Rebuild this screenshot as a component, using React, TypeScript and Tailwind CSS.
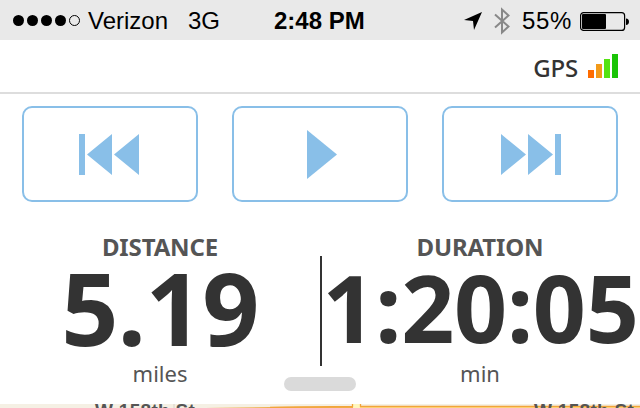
import React from 'react';

const bars = [
    { id: 'low', style: 'h-2 bg-[#ff6c00]' },
    { id: 'fair', style: 'h-[14px] bg-[#f29a1a]' },
    { id: 'good', style: 'h-[19px] bg-[#55e212]' },
    { id: 'full', style: 'h-6 bg-[#1ac406]' },
];

const controls = [
    {
        name: 'Previous',
        icon: (
            <svg className="mr-0.5" width="60" height="50" viewBox="0 0 60 50" fill="currentColor">
                <path d="M0 5H6V46H0ZM33 5V46L8 25.5ZM60 5V46L35 25.5Z" />
            </svg>
        ),
    },
    {
        name: 'Play',
        icon: (
            <svg width="60" height="50" viewBox="0 0 60 50" fill="currentColor">
                <path d="M17 1V50L47 25.5Z" />
            </svg>
        ),
    },
    {
        name: 'Next',
        icon: (
            <svg className="ml-0.5" width="60" height="50" viewBox="0 0 60 50" fill="currentColor">
                <path d="M0 5V46L25 25.5ZM27 5V46L52 25.5ZM54 5H60V46H54Z" />
            </svg>
        ),
    },
];

function StatusBar() {
    return (
        <header className="grid h-10 grid-cols-[274px_92px_1fr] items-center bg-[#e9e9e9] pt-0.5 font-['Liberation_Sans',sans-serif] text-2xl leading-none text-black">
            <div className="flex items-center pl-[13px]">
                <svg className="mr-[7px]" width="68" height="12" viewBox="0 0 68 12">
                    <circle cx="5.5" cy="5.5" r="5.5" />
                    <circle cx="19.5" cy="5.5" r="5.5" />
                    <circle cx="33.5" cy="5.5" r="5.5" />
                    <circle cx="47.5" cy="5.5" r="5.5" />
                    <circle cx="61.5" cy="5.5" r="5" fill="none" stroke="black" />
                </svg>
                <span className="w-[100px]">Verizon</span>
                <span>3G</span>
            </div>
            <span className="whitespace-nowrap font-bold">2:48 PM</span>
            <div className="flex items-center pl-[98px]">
                <svg width="18" height="18" viewBox="0 0 18 18">
                    <path d="M18 0L10 18L9 9L0 8Z" />
                </svg>
                <svg className="ml-3 mr-3" width="16" height="28" viewBox="0 0 16 28" fill="none" stroke="#888" strokeWidth="2">
                    <path d="M1 7.5L14.5 19.5L8 25.5V2.5L14.5 8.5L1 20.5" />
                </svg>
                <span className="w-[58px] tracking-[0.6px]">55%</span>
                <svg width="49" height="19" viewBox="0 0 49 19">
                    <rect x="0.6" y="0.6" width="44" height="17.8" rx="3" fill="none" stroke="black" strokeWidth="1.2" />
                    <rect x="2" y="2" width="24" height="15" rx="1" />
                    <path d="M46 6.5C48 6.5 49 8 49 9.7S48 13 46 13Z" />
                </svg>
            </div>
        </header>
    );
}

export default function App() {
    return (
        <div className="flex h-[408px] w-[640px] flex-col overflow-hidden bg-white font-['Noto_Sans','Open_Sans',sans-serif] text-[#555]">
            <StatusBar />

            {/* GPS signal */}
            <div className="flex h-[54px] items-center justify-end gap-[10px] border-b-2 border-[#ddd] pr-[22px]">
                <span className="pt-[3px] text-2xl font-medium leading-none tracking-[-0.2px] text-[#333]">GPS</span>
                <div className="flex h-6 items-end gap-0.5">
                    {bars.map(bar => (
                        <div key={bar.id} className={`w-1.5 ${bar.style}`} />
                    ))}
                </div>
            </div>

            {/* Playback controls */}
            <div className="flex gap-[34px] px-[22px] pt-3">
                {controls.map(item => (
                    <button
                        key={item.name}
                        aria-label={item.name}
                        className="flex h-24 w-[176px] items-center justify-center rounded-[10px] border-2 border-[#89bfe8] text-[#89bfe8]">
                        {item.icon}
                    </button>
                ))}
            </div>

            {/* Workout stats */}
            <section className="relative flex h-[202px] shrink-0 pt-[31px] text-center">
                <div className="w-[320px]">
                    <h2 className="text-2xl font-bold leading-7 tracking-[-0.15px]">DISTANCE</h2>
                    <p className="mt-[7px] h-[91px] text-[100px] font-bold leading-[78px] tracking-[-0.5px] text-[#333]">5.19</p>
                    <p className="text-[22px] leading-7">miles</p>
                </div>
                <div className="w-[320px]">
                    <h2 className="text-2xl font-bold leading-7 tracking-[-0.15px]">DURATION</h2>
                    <p className="mt-[7px] h-[91px] whitespace-nowrap pl-px text-[93px] font-bold leading-[78px] tracking-[-0.3px] text-[#333]">1:20:05</p>
                    <p className="text-[22px] leading-7">min</p>
                </div>
                <div className="absolute left-[320px] top-[54px] h-[110px] w-0.5 bg-[#333]" />
                <div className="absolute left-[284px] top-[175px] h-[14px] w-[72px] rounded-full bg-[#dadada]" />
            </section>

            {/* Top edge of the map */}
            <div className="relative h-1 shrink-0 overflow-hidden bg-[#f5f0e4]">
                <svg className="block" width="640" height="4" viewBox="0 0 640 4">
                    <path d="M205 4L300 2.5H353V4Z" fill="#efb04e" />
                    <path d="M353 0H360V4H353Z" fill="#fff7bd" />
                    <path d="M360 2H640V4H360Z" fill="#ffdf8a" />
                    <path d="M270 3.5L352.5 2.5V0M360.5 0V2.5H640" fill="none" stroke="#f2a43a" strokeWidth="1.3" />
                    <path d="M174 0V4M179 0V4" stroke="#d8d4ca" />
                </svg>
                <span className="absolute left-[95px] top-[-2px] whitespace-nowrap font-['Liberation_Sans',sans-serif] text-[19px] font-bold leading-[18px] tracking-[0.3px]">W 158th St</span>
                <span className="absolute left-[534px] top-[-2px] whitespace-nowrap font-['Liberation_Sans',sans-serif] text-[19px] font-bold leading-[18px] tracking-[0.3px]">W 158th St</span>
            </div>
        </div>
    );
}
